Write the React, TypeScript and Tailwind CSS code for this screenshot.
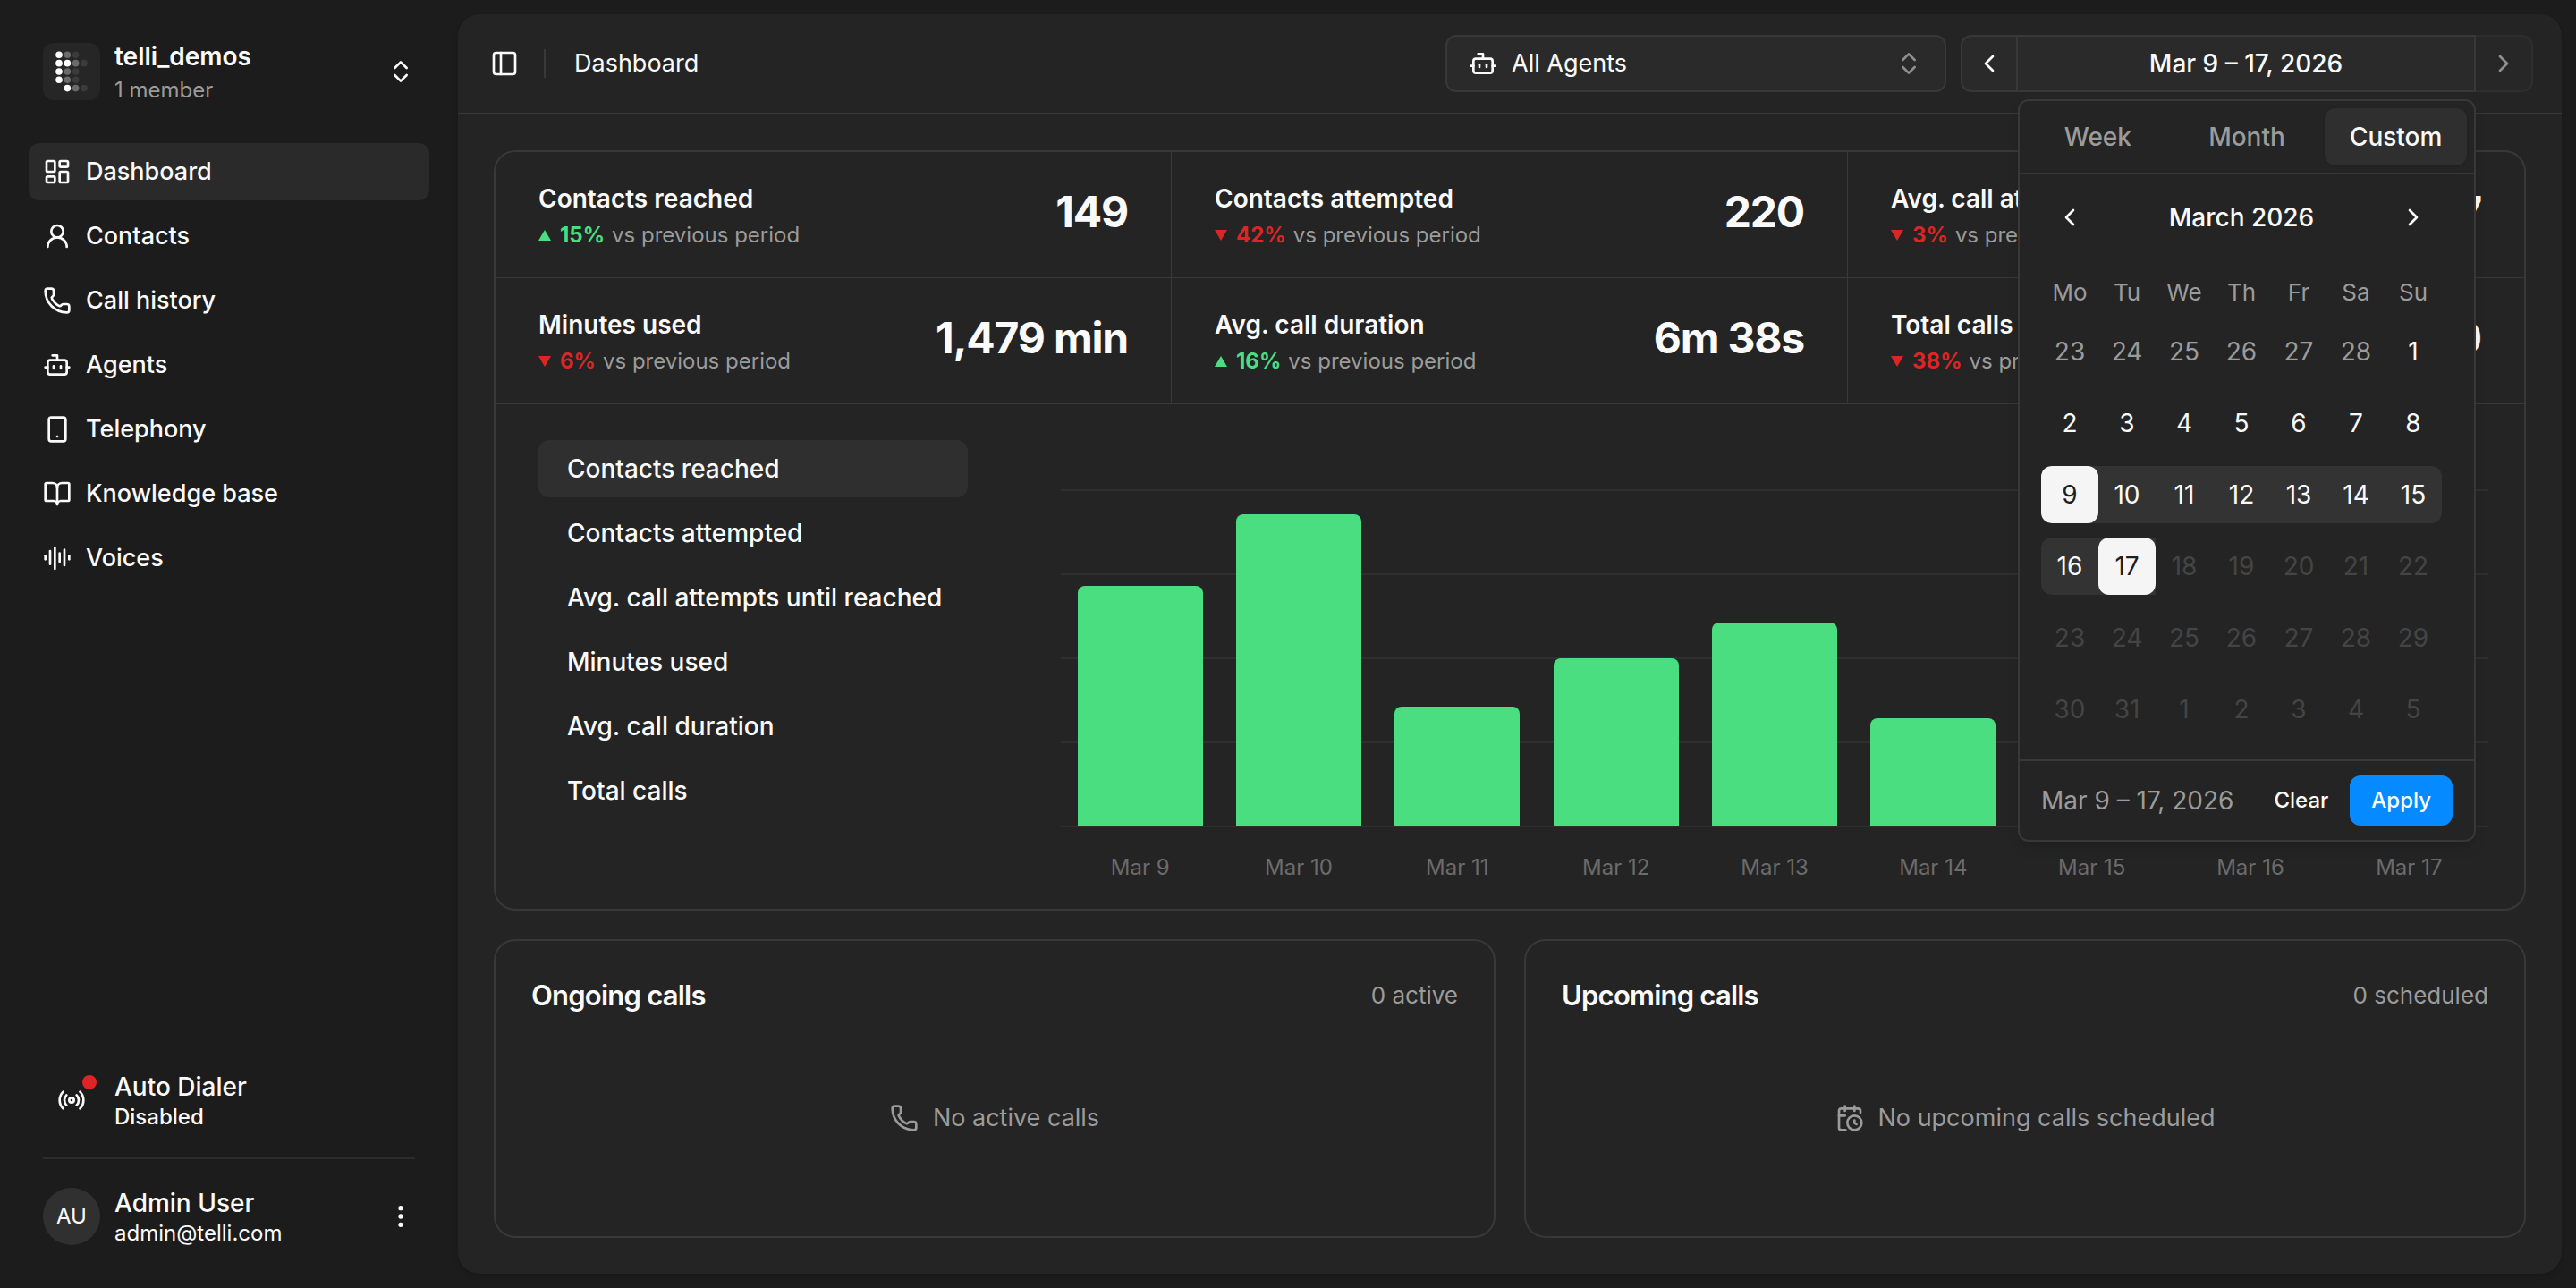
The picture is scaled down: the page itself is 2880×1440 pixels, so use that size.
import React from "react";
import {
  AudioLines,
  BookOpen,
  Bot,
  CalendarClock,
  ChevronLeft,
  ChevronRight,
  ChevronsUpDown,
  EllipsisVertical,
  LayoutDashboard,
  PanelLeft,
  Phone,
  Radio,
  Smartphone,
  UserRound,
  type LucideIcon,
} from "lucide-react";

const ICON = "size-8 shrink-0";

const NAV: { label: string; icon: LucideIcon }[] = [
  { label: "Dashboard", icon: LayoutDashboard },
  { label: "Contacts", icon: UserRound },
  { label: "Call history", icon: Phone },
  { label: "Agents", icon: Bot },
  { label: "Telephony", icon: Smartphone },
  { label: "Knowledge base", icon: BookOpen },
  { label: "Voices", icon: AudioLines },
];

const STATS = [
  { label: "Contacts reached", value: "149", change: 15 },
  { label: "Contacts attempted", value: "220", change: -42 },
  { label: "Avg. call attempts until reached", value: "1.7", change: -3 },
  { label: "Minutes used", value: "1,479 min", change: -6 },
  { label: "Avg. call duration", value: "6m 38s", change: 16 },
  { label: "Total calls", value: "290", change: -38 },
];

const METRICS = [
  "Contacts reached",
  "Contacts attempted",
  "Avg. call attempts until reached",
  "Minutes used",
  "Avg. call duration",
  "Total calls",
];

const CHART_MAX = 28;
const CHART = [
  { day: "Mar 9", count: 20 },
  { day: "Mar 10", count: 26 },
  { day: "Mar 11", count: 10 },
  { day: "Mar 12", count: 14 },
  { day: "Mar 13", count: 17 },
  { day: "Mar 14", count: 9 },
  { day: "Mar 15", count: 8 },
  { day: "Mar 16", count: 22 },
  { day: "Mar 17", count: 23 },
];

const WEEKDAYS = ["Mo", "Tu", "We", "Th", "Fr", "Sa", "Su"];
const FIRST_DAY = new Date(2026, 1, 23);
const WEEKS = Array.from({ length: 6 }, (_, w) =>
  Array.from(
    { length: 7 },
    (_, d) => new Date(FIRST_DAY.getFullYear(), FIRST_DAY.getMonth(), FIRST_DAY.getDate() + w * 7 + d),
  ),
);

// Letter mark made of dots: 3 = solid, 2 = mid, 1 = faint, 0 = empty.
const LOGO = [
  [3, 2, 1, 0],
  [3, 3, 2, 1],
  [3, 2, 1, 0],
  [3, 2, 1, 0],
  [0, 3, 2, 1],
];
const LOGO_FILL = ["none", "#3b3b3b", "#6b6b6b", "#ffffff"];

function Logo() {
  return (
    <svg viewBox="0 0 64 64" className="size-16 shrink-0 rounded-xl bg-[#262626]" aria-hidden="true">
      {LOGO.map((row, y) =>
        row.map((tone, x) =>
          tone ? (
            <circle key={`${x}-${y}`} cx={18 + x * 9.33} cy={13.3 + y * 9.33} r={3.8} fill={LOGO_FILL[tone]} />
          ) : null,
        ),
      )}
    </svg>
  );
}

function Sidebar() {
  return (
    <aside className="flex w-[512px] shrink-0 flex-col px-8 py-12">
      <button className="mb-12 flex items-center gap-4 px-4 text-left">
        <Logo />
        <span className="-my-3 flex flex-1 flex-col pt-1">
          <span className="text-[28px] leading-[38px] font-semibold">telli_demos</span>
          <span className="text-2xl leading-[38px] text-[#9b9b9b]">1 member</span>
        </span>
        <ChevronsUpDown className={ICON} />
      </button>

      <nav className="flex flex-col gap-2">
        {NAV.map(({ label, icon: Icon }, i) => (
          <a
            key={label}
            href="#"
            aria-current={i === 0 ? "page" : undefined}
            className={`flex h-16 items-center gap-4 rounded-xl px-4 text-[27px] font-medium ${i === 0 ? "bg-[#2a2a2a]" : ""}`}
          >
            <Icon className={ICON} />
            {label}
          </a>
        ))}
      </nav>

      <div className="mt-auto flex flex-col px-4">
        <button className="flex items-center gap-4 text-left">
          <span className="relative flex size-16 items-center justify-center">
            <Radio className={ICON} />
            <span className="absolute top-1 right-1 size-4 rounded-full bg-[#dc2626]" />
          </span>
          <span className="-my-3 flex flex-col pt-1">
            <span className="text-[28px] leading-[34px] font-medium">Auto Dialer</span>
            <span className="text-2xl leading-[34px] font-medium">Disabled</span>
          </span>
        </button>
        <hr className="my-8 border-t-2 border-[#2c2c2c]" />
        <button className="flex items-center gap-4 text-left">
          <span className="flex size-16 items-center justify-center rounded-full bg-[#303030] text-2xl">AU</span>
          <span className="-my-3 flex flex-1 flex-col pt-1">
            <span className="text-[28px] leading-[34px] font-medium">Admin User</span>
            <span className="text-2xl leading-[34px]">admin@telli.com</span>
          </span>
          <EllipsisVertical className={ICON} />
        </button>
      </div>
    </aside>
  );
}

function Day({ date, column }: { date: Date; column: number }) {
  const start = new Date(2026, 2, 9);
  const end = new Date(2026, 2, 17);
  const isEdge = +date === +start || +date === +end;
  const inRange = date >= start && date <= end;
  const disabled = date > end;
  const tone = isEdge
    ? "bg-[#f5f5f5] text-[#1f1f1f]"
    : disabled
      ? "text-[#444444]"
      : date.getMonth() !== 2
        ? "text-[#9b9b9b]"
        : "";
  const track = [
    inRange ? "bg-[#333333]" : "",
    column === 0 || +date === +start ? "rounded-l-xl" : "",
    column === 6 ? "rounded-r-xl" : "",
  ].join(" ");
  return (
    <td className="p-0 pt-4">
      <div className={track}>
        <button disabled={disabled} className={`size-16 rounded-xl text-[28px] ${tone}`}>
          {date.getDate()}
        </button>
      </div>
    </td>
  );
}

function DatePopover() {
  return (
    <div className="absolute inset-x-0 top-full z-10 mt-2 rounded-xl border-2 border-[#383838] bg-[#242424] text-[28px] shadow-lg">
      <div className="grid grid-cols-3 gap-2 border-b-2 border-[#383838] p-2 font-medium text-[#9b9b9b]">
        <button className="h-16">Week</button>
        <button className="h-16">Month</button>
        <button className="h-16 rounded-xl bg-[#2f2f2f] text-[#fafafa] shadow-sm">Custom</button>
      </div>
      <div className="p-6">
        <div className="mb-[42px] flex h-12 w-[448px] items-center justify-between">
          <button aria-label="Previous month" className="flex w-16 justify-center">
            <ChevronLeft className={ICON} />
          </button>
          <span className="font-medium">March 2026</span>
          <button aria-label="Next month" className="flex w-16 justify-center">
            <ChevronRight className={ICON} />
          </button>
        </div>
        <table className="w-[448px] table-fixed border-collapse text-center">
          <thead>
            <tr>
              {WEEKDAYS.map((d) => (
                <th key={d} className="h-9 p-0 text-[26px] leading-9 font-normal text-[#9b9b9b]">
                  {d}
                </th>
              ))}
            </tr>
          </thead>
          <tbody>
            {WEEKS.map((week, w) => (
              <tr key={w}>
                {week.map((date, d) => (
                  <Day key={d} date={date} column={d} />
                ))}
              </tr>
            ))}
          </tbody>
        </table>
      </div>
      <div className="flex items-center border-t-2 border-[#383838] px-6 py-4">
        <span className="flex-1 whitespace-nowrap text-[#9b9b9b]">Mar 9 – 17, 2026</span>
        <button className="h-14 px-6 text-2xl font-medium">Clear</button>
        <button className="h-14 rounded-xl bg-[#058aff] px-6 text-2xl font-medium text-white">Apply</button>
      </div>
    </div>
  );
}

function Header() {
  return (
    <header className="flex h-28 items-center border-b-2 border-[#383838] pr-8 pl-9">
      <button aria-label="Toggle sidebar">
        <PanelLeft className={ICON} />
      </button>
      <span className="mx-7 h-8 w-0.5 bg-[#383838]" />
      <h1 className="ml-1 flex-1 text-[27px]">Dashboard</h1>

      <div className="relative mr-4 flex h-16 w-[560px] items-center">
        <Bot className={`${ICON} pointer-events-none absolute left-[26px]`} />
        <select
          aria-label="Agents"
          className="h-full w-full appearance-none rounded-xl border-2 border-[#383838] bg-[#2a2a2a] px-[72px] text-[27px]"
        >
          <option>All Agents</option>
        </select>
        <ChevronsUpDown className={`${ICON} pointer-events-none absolute right-[26px] text-[#8f8f8f]`} />
      </div>

      <div className="flex h-16">
        <button
          aria-label="Previous period"
          className="flex w-16 items-center justify-center rounded-l-xl border-2 border-[#383838] bg-[#2a2a2a]"
        >
          <ChevronLeft className={ICON} />
        </button>
        <div className="relative w-[512px]">
          <button className="h-full w-full border-2 border-l-0 border-[#383838] bg-[#2a2a2a] text-[28px] font-medium">
            Mar 9 – 17, 2026
          </button>
          <DatePopover />
        </div>
        <button
          aria-label="Next period"
          disabled
          className="flex w-16 items-center justify-center rounded-r-xl border-2 border-l-0 border-[#383838] bg-[#2a2a2a] opacity-50"
        >
          <ChevronRight className={ICON} />
        </button>
      </div>
    </header>
  );
}

function Stat({ label, value, change, last }: { label: string; value: string; change: number; last: boolean }) {
  const up = change > 0;
  return (
    <div
      className={`flex items-start justify-between border-b border-[#383838] px-12 pt-8 pb-[26px] ${last ? "" : "border-r"}`}
    >
      <div className="whitespace-nowrap">
        <h2 className="text-[28px] leading-10 font-semibold">{label}</h2>
        <p className="flex items-center text-2xl leading-[42px] text-[#9b9b9b]">
          <svg
            viewBox="0 0 14 12"
            className={`mr-2.5 h-3 w-3.5 ${up ? "text-[#4ade80]" : "text-[#dc2626]"}`}
            fill="currentColor"
            aria-hidden="true"
          >
            <path d={up ? "M7 0 14 12H0Z" : "M0 0H14L7 12Z"} />
          </svg>
          <span className={`mr-2 font-bold ${up ? "text-[#4ade80]" : "text-[#dc2626]"}`}>{Math.abs(change)}%</span>
          vs previous period
        </p>
      </div>
      <span className="text-5xl leading-[70px] font-bold tracking-tight whitespace-nowrap">{value}</span>
    </div>
  );
}

function Chart() {
  return (
    <div className="min-w-0 flex-1 pt-14">
      <div className="grid h-[376px]">
        <div className="col-start-1 row-start-1 -my-px flex flex-col justify-between">
          {[0, 1, 2, 3, 4].map((i) => (
            <span key={i} className="h-0.5 bg-[#2f2f2f]" />
          ))}
        </div>
        <div className="col-start-1 row-start-1 grid grid-cols-9 items-end justify-items-center">
          {CHART.map(({ day, count }) => (
            <div
              key={day}
              className="w-[79%] rounded-t-lg bg-[#4ade80]"
              style={{ height: `${(count / CHART_MAX) * 100}%` }}
            />
          ))}
        </div>
      </div>
      <div className="mt-8 grid grid-cols-9 text-center text-2xl leading-7 text-[#6b6b6b]">
        {CHART.map(({ day }) => (
          <span key={day}>{day}</span>
        ))}
      </div>
    </div>
  );
}

function CallsCard({ title, count, empty, icon: Icon }: { title: string; count: string; empty: string; icon: LucideIcon }) {
  return (
    <section className="flex flex-col rounded-3xl border-2 border-[#383838] px-10 pt-10 pb-4">
      <div className="flex items-center justify-between leading-[42px]">
        <h2 className="text-[31px] font-semibold tracking-tight">{title}</h2>
        <span className="text-[26px] text-[#9b9b9b]">{count}</span>
      </div>
      <div className="flex flex-1 items-center justify-center gap-4 text-[27px] text-[#9b9b9b]">
        <Icon className={ICON} />
        {empty}
      </div>
    </section>
  );
}

export default function App() {
  return (
    <div className="flex min-h-screen bg-[#1c1c1c] font-[Inter,sans-serif] text-[#fafafa]">
      <Sidebar />
      <main className="my-4 mr-4 flex min-w-0 flex-1 flex-col rounded-3xl bg-[#242424] shadow-md">
        <Header />
        <div className="flex flex-1 flex-col gap-8 p-10">
          <section className="rounded-3xl border-2 border-[#383838]">
            <div className="grid grid-cols-3">
              {STATS.map((s, i) => (
                <Stat key={s.label} {...s} last={i % 3 === 2} />
              ))}
            </div>
            <div className="flex gap-[104px] pt-10 pr-10 pb-8 pl-12">
              <div className="flex w-[480px] flex-col gap-2">
                {METRICS.map((m, i) => (
                  <button
                    key={m}
                    className={`h-16 rounded-xl px-8 text-left text-[28px] font-medium whitespace-nowrap ${i === 0 ? "bg-[#2f2f2f]" : ""}`}
                  >
                    {m}
                  </button>
                ))}
              </div>
              <Chart />
            </div>
          </section>
          <div className="grid flex-1 grid-cols-2 gap-8">
            <CallsCard title="Ongoing calls" count="0 active" empty="No active calls" icon={Phone} />
            <CallsCard title="Upcoming calls" count="0 scheduled" empty="No upcoming calls scheduled" icon={CalendarClock} />
          </div>
        </div>
      </main>
    </div>
  );
}
